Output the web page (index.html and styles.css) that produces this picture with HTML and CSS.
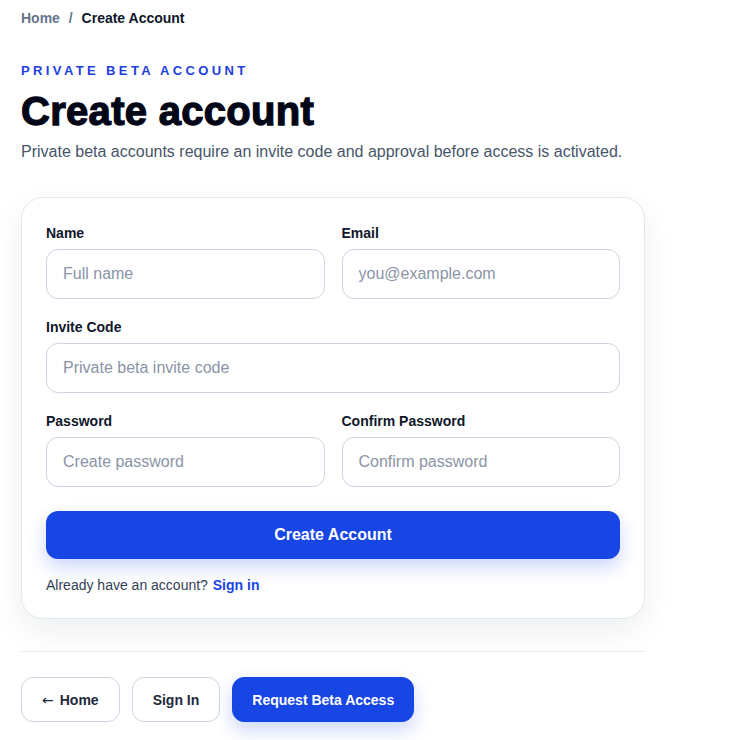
FILE: index.html
```html
<!DOCTYPE html>
<html lang="en">
<head>
  <meta charset="UTF-8">
  <title>Create Account</title>
  <link rel="stylesheet" href="styles.css">
</head>
<body>
  <div class="page">
    <nav class="crumbs">
      <a href="#">Home</a>
      <span class="sep">/</span>
      <span class="current">Create Account</span>
    </nav>

    <p class="eyebrow">Private Beta Account</p>
    <h1>Create account</h1>
    <p class="lead">Private beta accounts require an invite code and approval before access is activated.</p>

    <form class="card">
      <div class="row">
        <div class="field">
          <label for="name">Name</label>
          <input id="name" type="text" placeholder="Full name">
        </div>
        <div class="field">
          <label for="email">Email</label>
          <input id="email" type="email" placeholder="you@example.com">
        </div>
      </div>

      <div class="field">
        <label for="invite">Invite Code</label>
        <input id="invite" type="text" placeholder="Private beta invite code">
      </div>

      <div class="row">
        <div class="field">
          <label for="pw">Password</label>
          <input id="pw" type="password" placeholder="Create password">
        </div>
        <div class="field">
          <label for="pw2">Confirm Password</label>
          <input id="pw2" type="password" placeholder="Confirm password">
        </div>
      </div>

      <button type="button" class="submit">Create Account</button>

      <p class="alt">Already have an account? <a href="#">Sign in</a></p>
    </form>

    <hr>

    <div class="actions">
      <a href="#" class="btn"><span class="arrow">&larr;</span> Home</a>
      <a href="#" class="btn">Sign In</a>
      <a href="#" class="btn primary">Request Beta Access</a>
    </div>
  </div>
</body>
</html>
```

FILE: styles.css
```css
body {
  margin: 0;
  background: #fff;
  color: #0f172a;
  font-family: 'Liberation Sans', Arial, sans-serif;
}
.page {
  width: 624px;
  padding: 10px 21px 20px;
}
.crumbs {
  font-size: 14px;
  font-weight: bold;
  line-height: 16px;
}
.crumbs a {
  color: #64748b;
  text-decoration: none;
}
.crumbs .sep {
  color: #64748b;
  margin: 0 5px;
}
.crumbs .current {
  color: #0f172a;
}
.eyebrow {
  margin: 37px 0 0;
  font-size: 13px;
  line-height: 16px;
  font-weight: bold;
  text-transform: uppercase;
  letter-spacing: 0.26em;
  color: #1d3fe0;
}
h1 {
  margin: 9px 0 0;
  font-size: 40px;
  line-height: 46px;
  font-weight: 900;
  letter-spacing: 0.3px;
  -webkit-text-stroke: 1.3px #020617;
  color: #020617;
}
.lead {
  margin: 7px 0 0;
  font-size: 16px;
  line-height: 22px;
  color: #475569;
}
.card {
  margin-top: 34px;
  padding: 27px 24px 25px;
  border: 1px solid #e2e8f0;
  border-radius: 22px;
  background: #fff;
  box-shadow: 0 12px 32px rgba(15, 23, 42, 0.07);
  display: flex;
  flex-direction: column;
  gap: 20px;
}
.row {
  display: grid;
  grid-template-columns: 1fr 1fr;
  gap: 17px;
}
.field label {
  display: block;
  font-size: 14px;
  line-height: 16px;
  font-weight: bold;
  color: #0f172a;
  margin-bottom: 8px;
}
.field input {
  box-sizing: border-box;
  width: 100%;
  height: 50px;
  padding: 0 16px;
  border: 1px solid #cbd5e1;
  border-radius: 12px;
  font-family: inherit;
  font-size: 16px;
  color: #0f172a;
  background: #fff;
}
.field input::placeholder {
  color: #8a94a6;
}
.submit {
  margin-top: 4px;
  height: 48px;
  border: none;
  border-radius: 12px;
  background: #1746e5;
  color: #fff;
  font-family: inherit;
  font-size: 16px;
  font-weight: bold;
  box-shadow: 0 8px 18px rgba(23, 70, 229, 0.22);
}
.alt {
  margin: -2px 0 0;
  font-size: 14px;
  line-height: 16px;
  color: #334155;
}
.alt a {
  color: #1746e5;
  font-weight: bold;
  text-decoration: none;
  margin-left: 1px;
}
hr {
  margin: 32px 0 0;
  border: none;
  border-top: 1px solid #e2e8f0;
}
.actions {
  margin-top: 25px;
  display: flex;
  gap: 12px;
}
.btn {
  box-sizing: border-box;
  height: 45px;
  padding: 0 20px;
  display: flex;
  align-items: center;
  border: 1px solid #cbd5e1;
  border-radius: 12px;
  background: #fff;
  color: #1e293b;
  font-size: 14px;
  font-weight: bold;
  text-decoration: none;
}
.btn .arrow {
  font-family: 'DejaVu Sans', sans-serif;
  font-weight: normal;
  margin-right: 6px;
}
.btn.primary {
  padding: 0 19px;
  border-color: #1746e5;
  background: #1746e5;
  color: #fff;
  box-shadow: 0 8px 18px rgba(23, 70, 229, 0.22);
}
```
